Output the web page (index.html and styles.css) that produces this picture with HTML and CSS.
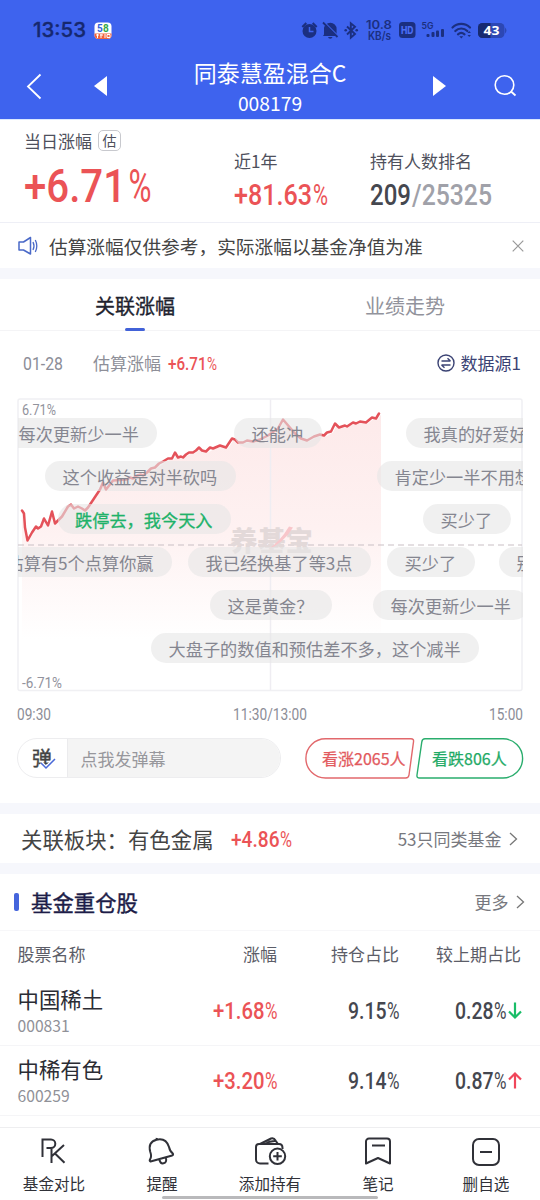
FILE: index.html
```html
<!DOCTYPE html>
<html lang="zh-CN">
<head>
<meta charset="utf-8">
<title>同泰慧盈混合C</title>
<link rel="stylesheet" href="styles.css">
</head>
<body>
<div class="app">
  <header class="top">
    <div class="status">
      <svg class="clock" width="54" height="15"><text x="0" y="14.5" textLength="53" lengthAdjust="spacingAndGlyphs">13:53</text></svg>
      <svg class="app58" width="18" height="18" viewBox="0 0 18 18">
        <rect x=".5" y=".5" width="17" height="16.5" rx="4" fill="#fff"/>
        <path d="M.5 11.5h17V13a4 4 0 0 1-4 4h-9a4 4 0 0 1-4-4z" fill="#f2633f"/>
        <text x="3" y="10" fill="#2f62dc">5</text><text x="9" y="10" fill="#35a84a">8</text>
        <path d="M2 13h3M3.5 12v4M7 12v4M6 13h3M11 12v4M13 12.5h3v3h-3z" stroke="#fff" fill="none"/>
      </svg>
      <svg class="sysicons" width="210" height="24" viewBox="300 18 210 24">
        <g fill="#1b2f80">
          <circle cx="309.5" cy="31" r="7"/>
          <path d="M302.3 27l4-4M316.7 27l-4-4" stroke="#1b2f80" stroke-width="2"/>
          <path d="M309.5 27v4.500h4" fill="none" stroke="#3e63ee" stroke-width="1.5"/>
          <path d="M324 34.500v-5.500a6.300 6.300 0 0 1 12.600 0v5l1.400 2h-15zM328 37h4.500a2.300 2.300 0 0 1-4.500 0z"/>
          <path d="M323.500 21.500l15 15" stroke="#3e63ee" stroke-width="1.600"/>
          <path d="M323 22.500l14.500 14.500" stroke="#1b2f80" stroke-width="1.800"/>
          <path d="M347 26.500l8 7.500-4.200 3.700v-14.500l4.200 3.500-8 7.800" fill="none" stroke="#1b2f80" stroke-width="1.9"/>
          <circle cx="345.7" cy="30.2" r="1.3"/><circle cx="356.7" cy="30.2" r="1.3"/>
          <rect x="399" y="22" width="16.5" height="16" rx="3.5"/>
          <rect x="426.5" y="34" width="3" height="3" rx="1"/><rect x="431.5" y="32" width="3" height="5" rx="1"/><rect x="436" y="30.5" width="3" height="6.5" rx="1"/><rect x="441" y="29" width="3" height="8" rx="1"/>
        </g>
        <g class="systext">
          <text x="366" y="28.5" textLength="26" lengthAdjust="spacingAndGlyphs">10.8</text>
          <text x="368" y="39.5" textLength="23" lengthAdjust="spacingAndGlyphs">KB/s</text>
          <text class="hd" x="401" y="33.700" textLength="12.5" lengthAdjust="spacingAndGlyphs">HD</text>
          <text class="g5" x="421.5" y="29" textLength="12" lengthAdjust="spacingAndGlyphs">5G</text>
        </g>
        <path d="M452.500 27.500a12.500 12.500 0 0 1 17.500 0M455.300 31a8.500 8.500 0 0 1 12 0M458 34.300a5 5 0 0 1 6.500 0" fill="none" stroke="#1b2f80" stroke-width="2.2" stroke-linecap="round"/>
        <path d="M459.300 36.200h4l-2 2.200zM467.500 33l1.700-2 1.700 2zM467.500 35l1.700 2 1.700-2z" fill="#1b2f80"/>
        <rect x="478" y="23" width="26.5" height="15" rx="4.5" fill="#2c47b4"/>
        <path d="M482.500 23h8v15h-8a4.500 4.500 0 0 1-4.500-4.500v-6a4.500 4.500 0 0 1 4.500-4.500z" fill="#172a70"/>
        <path d="M505 27.500q3 3 0 6z" fill="#2c47b4"/>
        <text class="batt" x="483.5" y="35.3" textLength="16" lengthAdjust="spacingAndGlyphs">43</text>
      </svg>
    </div>
    <nav class="nav">
      <svg class="back" width="16" height="27" viewBox="0 0 16 27"><path d="M14.500 1.500L2 13.500l12.500 12" fill="none" stroke="#fff" stroke-width="1.8"/></svg>
      <svg class="prev" width="13" height="20" viewBox="0 0 13 20"><path d="M13 0v20L0 10z" fill="#fff"/></svg>
      <div class="title"><h1>同泰慧盈混合C</h1><p>008179</p></div>
      <svg class="next" width="13" height="20" viewBox="0 0 13 20"><path d="M0 0v20l13-10z" fill="#fff"/></svg>
      <svg class="search" width="24" height="24" viewBox="0 0 24 24"><circle cx="10.5" cy="11" r="9.3" fill="none" stroke="#fff" stroke-width="1.6"/><path d="M17 17.500l4.500 4" stroke="#fff" stroke-width="1.8"/></svg>
    </nav>
  </header>

  <section class="summary">
    <div class="stat day">
      <p class="label">当日涨幅<span class="badge">估</span></p>
      <svg class="din big red" width="128" height="33"><text y="33" textLength="102" lengthAdjust="spacingAndGlyphs">+6.71</text><text class="pct" x="104.5" y="33" textLength="23" lengthAdjust="spacingAndGlyphs">%</text></svg>
    </div>
    <div class="stat year">
      <p class="label">近1年</p>
      <svg class="din mid red" width="95" height="21"><text y="21" textLength="78" lengthAdjust="spacingAndGlyphs">+81.63</text><text class="pct" x="79" y="21" textLength="15" lengthAdjust="spacingAndGlyphs">%</text></svg>
    </div>
    <div class="stat rank">
      <p class="label">持有人数排名</p>
      <svg class="din mid" width="122" height="21"><text class="dark" y="21" textLength="41" lengthAdjust="spacingAndGlyphs">209</text><text class="pale" x="42" y="21" textLength="80" lengthAdjust="spacingAndGlyphs">/25325</text></svg>
    </div>
  </section>

  <section class="notice">
    <svg width="20" height="20" viewBox="0 0 20 20" fill="none" stroke="#4a69c8" stroke-width="1.5" stroke-linejoin="round"><path d="M1 6h4.500L12.500 1.500v16.500L5.500 14H1z"/><path d="M15 6q2 4 0 8M17.300 4q3 6 0 12" stroke-width="1.3"/></svg>
    <p>估算涨幅仅供参考，实际涨幅以基金净值为准</p>
    <svg class="close" width="12" height="12" viewBox="0 0 12 12"><path d="M.7.7l10.600 10.600M11.300.7L.7 11.300" stroke="#999" stroke-width="1.2"/></svg>
  </section>

  <section class="tabs"><div class="tab on">关联涨幅</div><div class="tab">业绩走势</div></section>

  <section class="trend">
    <div class="info">
      <svg class="din sm grey" width="41" height="13"><text y="13" textLength="40" lengthAdjust="spacingAndGlyphs">01-28</text></svg>
      <span class="est">估算涨幅</span>
      <svg class="din sm red" width="49" height="13"><text y="13" textLength="38.5" lengthAdjust="spacingAndGlyphs">+6.71</text><text class="pct" x="39" y="13" textLength="10" lengthAdjust="spacingAndGlyphs">%</text></svg>
      <span class="source"><svg width="18" height="18" viewBox="0 0 18 18" fill="none" stroke="#3b4374" stroke-width="1.4"><circle cx="9" cy="9" r="8"/><path d="M4.500 7h9M10.500 4.300L13.500 7M13.500 11h-9M7.500 13.700L4.500 11"/></svg>数据源1</span>
    </div>
    <div class="chart">
      <svg class="plot" width="506" height="294" viewBox="17 398.5 506 294">
        <defs><linearGradient id="fade" x1="0" y1="415" x2="0" y2="640" gradientUnits="userSpaceOnUse"><stop offset="0" stop-color="#fdeaea"/><stop offset=".5" stop-color="#fef1f1"/><stop offset="1" stop-color="#fff"/></linearGradient></defs>
        <path fill="url(#fade)" d="M22 511l2 3 1 14 2.500 13 4.500-8 4-6 2 2 3-2 3-8 4 7 4-14 3 12 3-3 4-4 6-10 3-2 3 4 4-2 4 2 3 2 3-3 4-6 4-6 4-6 3-7 3 7 7-9 14-1 10-3 10-2 10-6 8-6 5-3h4l3-6 3 5 8-3 3-2h4l6-5 7 4 7-4 7-2 6 2 6-9 11 4 10-2 7-1 8-4 10-7 5-9 6 7 6 7 6 5 6 2 7-4 6-2 4 1 7-4 4-8 4 4 6-2 8-3 7-1 6 1 6-5 4 1 3-5V645H22z"/>
        <rect x="18" y="399.5" width="504" height="291.5" rx="2" fill="none" stroke="#f0f0f3" stroke-width="1.5"/>
        <path d="M270.500 400v291" stroke="#efedf2" stroke-width="1.5"/>
        <path d="M18 545.500h504" stroke="#c9bfc4" stroke-dasharray="6 4"/>
        <text class="mark" x="230" y="551" textLength="83" lengthAdjust="spacingAndGlyphs">养基宝</text>
        <path d="M268 550q12-8 21-23l4 1q-9 15-25 22z" fill="#f8c6ca"/>
        <path fill="none" stroke="#e4525a" stroke-width="2.5" stroke-linejoin="round" stroke-linecap="round" d="M22 511l2 3 1 14 2.500 13 4.500-8 4-6 2 2 3-2 3-8 4 7 4-14 3 12 3-3 4-4 6-10 3-2 3 4 4-2 4 2 3 2 3-3 4-6 4-6 4-6 3-7 3 7 7-9 14-1 3-2 3 1 4-3 4-1 2 1 4-3 4-4 4-1 4-4 4-2 5-3h4l3-6 3 5 3-1 2 1 3-3 3-2h4l3-2 3-3 3 3 4 1 4-4 3 1 7-3 6 2 6-9 3 1 3 3 5 0 4-2 6 1 7-2 8-4 10-7 5-9 6 7 6 7 6 5 6 2 7-4 6-2 4 1 3-3 4-1 4-8 4 4 6-2 2 1 6-4 3 1 4-2 6 1 6-5 4 1 3-5"/>
        <g class="scale"><text x="22" y="415" textLength="34" lengthAdjust="spacingAndGlyphs">6.71%</text><text x="22" y="688" textLength="40" lengthAdjust="spacingAndGlyphs">-6.71%</text></g>
      </svg>
      <div class="barrage">
        <span class="b r1 a1">每次更新少一半</span><span class="b r1 a2">还能冲</span><span class="b r1 a3">我真的好爱好</span>
        <span class="b r2 a4">这个收益是对半砍吗</span><span class="b r2 a5">肯定少一半不用想</span>
        <span class="b r3 a6 green">跌停去，我今天入</span><span class="b r3 a7">买少了</span>
        <span class="b r4 a8">估算有5个点算你赢</span><span class="b r4 a9">我已经换基了等3点</span><span class="b r4 a10">买少了</span><span class="b r4 a11">别</span>
        <span class="b r5 a12">这是黄金？</span><span class="b r5 a13">每次更新少一半</span>
        <span class="b r6 a14">大盘子的数值和预估差不多，这个减半</span>
      </div>
    </div>
    <div class="times">
      <svg class="din xs grey" width="34" height="12"><text y="12" textLength="34" lengthAdjust="spacingAndGlyphs">09:30</text></svg>
      <svg class="din xs grey" width="74" height="12"><text y="12" textLength="74" lengthAdjust="spacingAndGlyphs">11:30/13:00</text></svg>
      <svg class="din xs grey" width="34" height="12"><text y="12" textLength="34" lengthAdjust="spacingAndGlyphs">15:00</text></svg>
    </div>
    <div class="actions">
      <div class="send"><div class="toggle">弹<svg width="16" height="12" viewBox="0 0 16 12"><path d="M1 5l5 5L15 1" fill="none" stroke="#fff" stroke-width="4"/><path d="M1 5l5 5L15 1" fill="none" stroke="#4a69d8" stroke-width="1.5"/></svg></div><div class="field">点我发弹幕</div></div>
      <div class="vote up"><svg width="110" height="41" viewBox="0 0 110 41"><path d="M20.500.8H106q3 0 2.500 3L104 37q-.4 3-3.400 3H20.500a19.600 19.600 0 0 1 0-39.200z" fill="none" stroke="#e2686c" stroke-width="1.4"/></svg><span>看涨2065人</span></div>
      <div class="vote down"><svg width="108" height="41" viewBox="0 0 108 41"><path d="M87 .8H9q-2.700 0-3.200 3L1 37q-.4 3 2.600 3H87A19.600 19.600 0 0 0 87 .8z" fill="none" stroke="#2aad6d" stroke-width="1.4"/></svg><span>看跌806人</span></div>
    </div>
  </section>

  <section class="sector">
    <b>关联板块：有色金属</b>
    <svg class="din s22 red" width="61" height="15.5"><text y="15.5" textLength="48.5" lengthAdjust="spacingAndGlyphs">+4.86</text><text class="pct" x="49" y="15.5" textLength="12" lengthAdjust="spacingAndGlyphs">%</text></svg>
    <span class="more">53只同类基金<svg width="9" height="14" viewBox="0 0 9 14"><path d="M1 1l6.500 6L1 13" fill="none" stroke="#777" stroke-width="1.3"/></svg></span>
  </section>

  <section class="holdings">
    <div class="heading"><i></i><h2>基金重仓股</h2><span class="more">更多<svg width="9" height="14" viewBox="0 0 9 14"><path d="M1 1l6.500 6L1 13" fill="none" stroke="#777" stroke-width="1.3"/></svg></span></div>
    <div class="row head"><span>股票名称</span><span>涨幅</span><span>持仓占比</span><span>较上期占比</span></div>
    <div class="row">
      <div class="stock"><b>中国稀土</b><small>000831</small></div>
      <svg class="din s23 red" width="64" height="17"><text y="17" textLength="51.5" lengthAdjust="spacingAndGlyphs">+1.68</text><text class="pct" x="52" y="17" textLength="12.5" lengthAdjust="spacingAndGlyphs">%</text></svg>
      <svg class="din s23 dark" width="51" height="17"><text y="17" textLength="38.5" lengthAdjust="spacingAndGlyphs">9.15</text><text class="pct" x="39" y="17" textLength="12.5" lengthAdjust="spacingAndGlyphs">%</text></svg>
      <div class="change"><svg class="din s23 dark" width="51" height="17"><text y="17" textLength="38.5" lengthAdjust="spacingAndGlyphs">0.28</text><text class="pct" x="39" y="17" textLength="12.5" lengthAdjust="spacingAndGlyphs">%</text></svg><svg width="14" height="17" viewBox="0 0 14 17"><path d="M7 .5v15M1 9.500l6 6 6-6" fill="none" stroke="#19bd68" stroke-width="2.2"/></svg></div>
    </div>
    <div class="row">
      <div class="stock"><b>中稀有色</b><small>600259</small></div>
      <svg class="din s23 red" width="64" height="17"><text y="17" textLength="51.5" lengthAdjust="spacingAndGlyphs">+3.20</text><text class="pct" x="52" y="17" textLength="12.5" lengthAdjust="spacingAndGlyphs">%</text></svg>
      <svg class="din s23 dark" width="51" height="17"><text y="17" textLength="38.5" lengthAdjust="spacingAndGlyphs">9.14</text><text class="pct" x="39" y="17" textLength="12.5" lengthAdjust="spacingAndGlyphs">%</text></svg>
      <div class="change"><svg class="din s23 dark" width="51" height="17"><text y="17" textLength="38.5" lengthAdjust="spacingAndGlyphs">0.87</text><text class="pct" x="39" y="17" textLength="12.5" lengthAdjust="spacingAndGlyphs">%</text></svg><svg width="14" height="17" viewBox="0 0 14 17"><path d="M7 16.500v-15M1 7.500l6-6 6 6" fill="none" stroke="#f0465a" stroke-width="2.2"/></svg></div>
    </div>
  </section>

  <footer class="tools">
    <div class="tool"><svg width="30" height="30" viewBox="0 0 30 30"><path d="M3.500 20V2.500h8.500a4.300 4.300 0 0 1 0 8.600H7.500M12.500 10.500v15.500M25 8L13 19M16 16.500l9.500 9.300"/></svg>基金对比</div>
    <div class="tool"><svg width="30" height="30" viewBox="0 0 30 30"><path d="M3.500 24.500q-1.300-.5-.5-2 2-3 .3-7.500Q.5 5 9.500 2.700q9.500-2.200 12.500 7.300 1 4.500 3.700 6.300 1 1.300-.5 2.200zM12.500 23q1 4 4 3.300 3.500-.8 2.500-5M9.500 2.500l.3-1.500" stroke-linejoin="round"/></svg>提醒</div>
    <div class="tool"><svg width="34" height="30" viewBox="0 0 34 30"><path d="M15.500 26.500H7a4 4 0 0 1-4-4V10q0-3 3-3h20q3.500 0 3.500 4v1M7 7L18 1.500q3-.9 4.500 2L25 7M12 7q5-3.500 11-3"/><circle cx="24.5" cy="19.3" r="7.7"/><path d="M24.500 15v8.600M20.200 19.300h8.600"/></svg>添加持有</div>
    <div class="tool"><svg width="30" height="30" viewBox="0 0 30 30"><path d="M3 26.500V4.500a3 3 0 0 1 3-3h18a3 3 0 0 1 3 3v22L15 21z M9 8.500h13" stroke-linejoin="round"/></svg>笔记</div>
    <div class="tool"><svg width="30" height="30" viewBox="0 0 30 30"><rect x="2" y="2" width="26" height="26" rx="6"/><path d="M9 15h12"/></svg>删自选</div>
    <div class="home"></div>
  </footer>
</div>
</body>
</html>
```

FILE: styles.css
```css
* { box-sizing: border-box; margin: 0; padding: 0; }
body { width: 540px; height: 1200px; overflow: hidden; background: #fff; font-family: "Noto Sans CJK SC", sans-serif; font-size: 17px; line-height: 24px; color: #333; }
svg { display: block; flex: none; overflow: visible; }
.app { width: 540px; height: 1200px; display: flex; flex-direction: column; }

.top { height: 120px; background: #3e63ee; border-bottom: 1px solid #dbe8ff; }
.status { height: 60px; display: flex; padding-left: 33px; }
.clock { margin-top: 22px; font: 500 20px Inter, sans-serif; fill: #16286e; stroke: #16286e; stroke-width: .3px; }
.app58 { margin: 21.5px 0 0 7px; font: 700 10px Roboto, sans-serif; }
.sysicons { margin: 18px 0 0 188px; }
.systext { font: 600 11.5px Inter, sans-serif; fill: #1b2f80; }
.systext .hd { font-size: 10px; font-weight: 800; fill: #4a6df5; }
.systext .g5 { font-size: 9.5px; }
.batt { font: 700 13px "Open Sans", sans-serif; fill: #fff; }
.nav { display: flex; height: 59px; color: #fff; }
.back { margin: 12.5px 0 0 26px; }
.prev { margin: 16px 0 0 52px; }
.title { width: 326px; text-align: center; }
.title h1 { font-size: 23px; line-height: 28px; font-weight: 400; margin-top: -2px; }
.title p { font-size: 19.3px; line-height: 26px; margin-top: 4px; }
.next { margin: 16px 0 0 0; }
.search { margin: 14px 0 0 48px; }

.din { font-family: Roboto, sans-serif; font-weight: 500; }
.din .pct { font-weight: 400; }
.big { font-size: 46px; }
.mid { font-size: 29.5px; }
.sm { font-size: 18px; }
.xs { font-size: 16.5px; }
.s22 { font-size: 22px; }
.s23 { font-size: 23.5px; }
.red { fill: #eb5356; }
.dark { fill: #45474f; }
.pale { fill: #a0a1a9; }
.grey { fill: #8c8d97; }
.sm.grey, .xs { font-weight: 400; }

.summary { height: 103px; display: flex; border-bottom: 1px solid #eeeff6; color: #4e505c; }
.stat { padding-top: 29px; }
.day { width: 210px; padding: 9px 0 0 24px; }
.year { padding-left: 24px; width: 160px; }
.day .label { display: flex; }
.badge { width: 23px; height: 21px; border: 1.5px solid #c8c9ce; border-radius: 5px; font-size: 14px; line-height: 18px; text-align: center; margin: 1px 0 0 6px; }
.day .din { margin-top: 16px; }
.year .din, .rank .din { margin-top: 11px; }

.notice { height: 45px; display: flex; align-items: center; padding: 0 16px 0 18px; color: #444; }
.notice p { font-size: 18.7px; margin: 0 auto 0 11px; }

.tabs { height: 63px; border-top: 11px solid #f6f7fc; border-bottom: 1px solid #f4f4f6; display: flex; }
.tab { flex: 1; text-align: center; font-size: 20px; line-height: 53px; color: #92939c; position: relative; }
.tab.on { color: #20222e; -webkit-text-stroke: .35px; }
.tab.on::after { content: ""; position: absolute; left: 125px; bottom: -1px; width: 20px; height: 3px; border-radius: 1.5px; background: #4262d8; }

.trend { height: 472px; padding: 0 17px; }
.info { height: 66.5px; display: flex; align-items: center; padding: 0 2px 1px 6px; color: #8e8f98; }
.info .est { margin: -2px 7px 0 29px; }
.source { display: flex; align-items: center; gap: 6px; margin: -2px 0 0 auto; color: #3b4374; }
.chart { height: 294px; position: relative; overflow: hidden; }
.mark { font: 900 27px "Noto Sans CJK SC", sans-serif; fill: #e3d9d9; }
.scale { font: 15px Roboto, sans-serif; fill: #92939d; }
.barrage { position: absolute; inset: 0 0 0 1px; overflow: hidden; }
.b { position: absolute; height: 30px; border-radius: 15px; padding: 0 18.5px 0 17.5px; background: rgba(230,230,230,.6); color: #858690; font-size: 17.2px; line-height: 31px; white-space: nowrap; }
.green { color: #1eb269; -webkit-text-stroke: .3px; }
.r1 { top: 20px; } .r2 { top: 63px; } .r3 { top: 106px; } .r4 { top: 149px; } .r5 { top: 192px; } .r6 { top: 235px; }
.a1 { left: -17px; } .a2 { left: 216px; } .a3 { left: 388px; } .a4 { left: 27px; } .a5 { left: 359px; }
.a6 { left: 39.5px; } .a7 { left: 405px; } .a8 { left: -29px; } .a9 { left: 170px; } .a10 { left: 369px; } .a11 { left: 481px; }
.a12 { left: 192px; } .a13 { left: 355px; } .a14 { left: 133px; }
.times { display: flex; justify-content: space-between; padding-top: 16px; height: 46px; }
.actions { display: flex; height: 40px; }
.send { width: 264px; height: 40px; border: 1px solid #ededef; border-radius: 20px; overflow: hidden; display: flex; margin-right: 23.5px; }
.toggle { width: 49px; padding-left: 14px; font-size: 20px; line-height: 38px; -webkit-text-stroke: .4px; color: #444; position: relative; }
.toggle svg { position: absolute; left: 22px; top: 19px; }
.field { flex: 1; background: #f4f4f4; border-left: 1px solid #ebebed; padding-left: 12.5px; line-height: 39px; color: #97979c; }
.vote { position: relative; font-size: 16px; -webkit-text-stroke: .25px; line-height: 40px; height: 40px; }
.vote svg { position: absolute; left: 0; top: 0; }
.up { width: 111px; padding-left: 17.5px; color: #e2595d; }
.down { width: 107px; padding-left: 16.5px; color: #1faa66; }

.sector { height: 71px; border: solid #f6f7fc; border-width: 11px 0; display: flex; align-items: center; padding: 0 22.5px 0 21px; }
.sector b { font-size: 21.4px; font-weight: 400; margin: 0 17px 0 0; color: #444; }
.more { display: flex; align-items: center; gap: 7px; margin-left: auto; color: #77787e; }

.heading { height: 57px; display: flex; align-items: center; padding: 0 15.5px 0 14px; border-bottom: 1px solid #f7f7f9; }
.heading i { width: 5px; height: 18px; border-radius: 2px; background: #4565dc; }
.heading h2 { font-size: 21.4px; font-weight: 400; -webkit-text-stroke: .4px; margin-left: 12px; color: #1d1d48; }
.row { display: grid; grid-template-columns: 165px 94.5px 122px 123px; height: 70.5px; padding-left: 17.5px; align-items: center; justify-items: end; border-bottom: 1px solid #f5f5f7; }
.row.head { height: 44px; border: 0; color: #5c5d68; padding-top: 2px; }
.row > :first-child { justify-self: start; }
.row.head > :last-child { margin-right: 1px; }
.stock { padding-top: 3px; }
.stock b, .stock small { display: block; }
.stock b { font-size: 21.4px; line-height: 28px; font-weight: 400; color: #2b2c34; }
.stock small { font-size: 15.7px; line-height: 24px; margin-top: 1px; color: #909198; }
.row .din { margin-top: 1px; }
.change { display: flex; gap: 2px; }
.change svg { margin-top: 1px; }

.tools { position: relative; margin-top: auto; height: 73px; border-top: 1px solid #eeeef0; display: grid; grid-template-columns: repeat(5, 108px); padding-top: 9px; background: #fff; }
.tool { display: flex; flex-direction: column; align-items: center; font-size: 15.6px; line-height: 24px; gap: 4px; color: #303138; }
.tool svg { fill: none; stroke: #303138; stroke-width: 2; }
.home { position: absolute; left: 162px; top: 68px; width: 216px; height: 3px; border-radius: 2px; background: #b9b9bb; }
```
